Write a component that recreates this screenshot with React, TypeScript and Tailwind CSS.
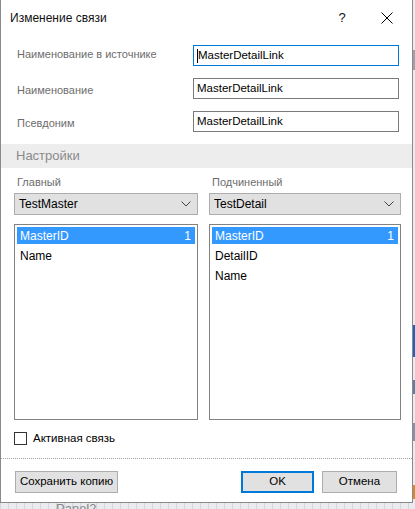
import React from "react";

const font = { fontFamily: '"Liberation Sans", Arial, sans-serif' };

function TextField({ value, focused }: { value: string; focused?: boolean }) {
  return (
    <div
      className={`w-[206px] h-[21px] flex items-center pl-[3px] bg-white text-[11.5px] text-black border ${
        focused ? "border-[#0078d7]" : "border-[#7a7a7a]"
      }`}
    >
      {focused && <span className="w-px h-[14px] bg-black" />}
      <span>{value}</span>
    </div>
  );
}

function Combo({ value, width }: { value: string; width: string }) {
  return (
    <div
      className={`${width} h-[22px] flex items-center justify-between pl-[4px] pr-[6px] bg-[#e1e1e1] border border-[#adadad] text-[12px] text-black`}
    >
      <span>{value}</span>
      <svg width="10" height="6" viewBox="0 0 10 6">
        <path d="M0.5 0.5 L5 5 L9.5 0.5" fill="none" stroke="#444" strokeWidth="1" />
      </svg>
    </div>
  );
}

function ListBox({ items, width }: { items: string[]; width: string }) {
  return (
    <div className={`${width} h-[196px] border border-[#828282] bg-white pt-[2px] px-[2px] flex flex-col gap-[3px] text-[12px]`}>
      {items.map((it, i) => (
        <div
          key={it}
          className={`h-[17px] flex items-center justify-between pl-[3px] pr-[4px] ${
            i === 0 ? "bg-[#3399ff] text-white" : "text-black"
          }`}
        >
          <span>{it}</span>
          {i === 0 && <span>1</span>}
        </div>
      ))}
    </div>
  );
}

function Button({ label, width, primary }: { label: string; width: string; primary?: boolean }) {
  return (
    <div
      className={`${width} h-[22px] flex items-center justify-center whitespace-nowrap bg-[#e1e1e1] text-[11.5px] text-black ${
        primary ? "border-2 border-[#0078d7]" : "border border-[#adadad]"
      }`}
    >
      {label}
    </div>
  );
}

const fields: { label: string; focused: boolean; shift: string }[] = [
  { label: "Наименование в источнике", focused: true, shift: "-mt-[3px]" },
  { label: "Наименование", focused: false, shift: "mt-[3px]" },
  { label: "Псевдоним", focused: false, shift: "mt-[3px]" },
];

export default function App() {
  return (
    <div className="relative w-[415px] h-[509px] overflow-hidden bg-[#e9ebee]" style={font}>
      {/* application window behind the dialog */}
      <div className="absolute inset-0 bg-[repeating-linear-gradient(90deg,#d4d6d9_0px,#d4d6d9_1px,transparent_1px,transparent_8px)]" />
      <div className="absolute right-0 top-[50px] w-[3px] h-[20px] bg-[#9aa3ad]" />
      <div className="absolute right-0 top-[325px] w-[3px] h-[32px] bg-[#1e62bf]" />
      <div className="absolute right-0 top-[380px] w-[3px] h-[14px] bg-[#5c7fa6]" />
      <div className="absolute right-0 top-[423px] w-[3px] h-[18px] bg-[#8496ad]" />
      <div className="absolute right-0 top-[485px] w-[3px] h-[14px] bg-[#d88a2a]" />
      <div className="absolute left-[56px] top-[502px] text-[13px] leading-[13px] text-[#888]">Panel2</div>

      {/* dialog */}
      <div className="relative w-[413px] h-[503px] bg-white border-l border-r border-b border-[#8a8a8a] flex flex-col">
        {/* title bar */}
        <div className="h-[36px] flex items-center pl-[9px] text-[12px] text-[#111]">
          <span className="flex-1">Изменение связи</span>
          <span className="w-[20px] text-center text-[13px] mr-[29px]">?</span>
          <svg width="12" height="12" viewBox="0 0 12 12" className="mr-[19px]">
            <path d="M0.5 0.5 L11.5 11.5 M11.5 0.5 L0.5 11.5" stroke="#000" strokeWidth="1" />
          </svg>
        </div>

        {/* name fields */}
        <div className="flex flex-col gap-[12px] pt-[9px] pl-[16px] pr-[13px] text-[11px] text-[#6d6d6d]">
          {fields.map((f) => (
            <div key={f.label} className="flex items-center justify-between h-[21px]">
              <span className={f.shift}>{f.label}</span>
              <TextField value="MasterDetailLink" focused={f.focused} />
            </div>
          ))}
        </div>

        {/* settings header */}
        <div className="mt-[12px] h-[24px] bg-[#ededed] flex items-center pl-[15px] text-[13px] text-[#8a8a8a]">
          Настройки
        </div>

        {/* master / detail columns */}
        <div className="flex gap-[11px] pl-[13px] pt-[6px]">
          <div className="flex flex-col">
            <div className="h-[17px] pl-[3px] text-[11px] text-[#6d6d6d] leading-[17px]">Главный</div>
            <div className="mt-[2px]">
              <Combo value="TestMaster" width="w-[184px]" />
            </div>
            <div className="mt-[9px]">
              <ListBox items={["MasterID", "Name"]} width="w-[184px]" />
            </div>
          </div>
          <div className="flex flex-col">
            <div className="h-[17px] pl-[3px] text-[11px] text-[#6d6d6d] leading-[17px]">Подчиненный</div>
            <div className="mt-[2px]">
              <Combo value="TestDetail" width="w-[192px]" />
            </div>
            <div className="mt-[9px]">
              <ListBox items={["MasterID", "DetailID", "Name"]} width="w-[192px]" />
            </div>
          </div>
        </div>

        {/* active checkbox */}
        <div className="flex items-center pl-[13px] mt-[12px] h-[13px] text-[11.5px] text-black">
          <div className="w-[13px] h-[13px] border border-[#333] bg-white" />
          <span className="ml-[6px]">Активная связь</span>
        </div>

        {/* separator */}
        <div className="mt-[13px] border-t border-dotted border-[#a0a0a0]" />

        {/* buttons */}
        <div className="flex items-center pl-[14px] pr-[15px] mt-[12px]">
          <Button label="Сохранить копию" width="w-[103px]" />
          <div className="flex-1" />
          <Button label="OK" width="w-[73px]" primary />
          <div className="w-[8px]" />
          <Button label="Отмена" width="w-[75px]" />
        </div>
      </div>
    </div>
  );
}
